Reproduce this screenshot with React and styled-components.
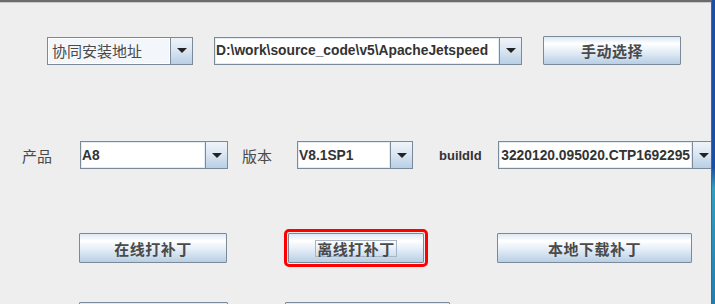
import styled, { createGlobalStyle } from "styled-components";

const GlobalStyle = createGlobalStyle`
	html, body {
		margin: 0;
		padding: 0;
		background: #eeeeee;
		overflow: hidden;
	}
`;

const Screen = styled.div`
	width: 715px;
	height: 304px;
	display: flex;
	overflow: hidden;
	background: #eeeeee;
`;

const Panel = styled.div`
	flex: 1;
	min-width: 0;
	display: flex;
	flex-direction: column;
	overflow: hidden;
	border-top: 2px solid #6b6b6b;
	box-shadow: inset 0 1px 0 #c9c9c9;
`;

const DesktopEdge = styled.div`
	width: 3px;
	border-left: 1px solid #5a6470;
	background: linear-gradient(#1c4ea6 0%, #1c4ea6 55%, #2f9fc0 62%, #1e7fb0 100%);
`;

const Row = styled.div`
	display: flex;
	align-items: center;
	flex-shrink: 0;
	height: ${(p) => p.h}px;
	margin-top: ${(p) => p.top}px;
	padding-left: ${(p) => p.left || 0}px;
`;

const Label = styled.span`
	font-family: "Noto Sans CJK SC", sans-serif;
	font-size: 15px;
	color: #4a4a4a;
	width: ${(p) => p.w}px;
	flex-shrink: 0;
	margin-left: ${(p) => p.ml || 0}px;
`;

const LatinLabel = styled.span`
	font-family: "Liberation Sans", Arial, sans-serif;
	font-weight: bold;
	font-size: 13px;
	color: #333333;
	width: ${(p) => p.w}px;
	flex-shrink: 0;
	margin-left: ${(p) => p.ml || 0}px;
`;

const Combo = styled.div`
	display: flex;
	flex-shrink: 0;
	width: ${(p) => p.w}px;
	height: 28px;
	box-sizing: border-box;
	border: 1px solid #7a8a99;
	margin-left: ${(p) => p.ml || 0}px;
	background: ${(p) => (p.editable ? "#ffffff" : "#f3f6fa")};
`;

const ComboField = styled.div`
	flex: 1;
	min-width: 0;
	display: flex;
	align-items: center;
	justify-content: ${(p) => (p.alignEnd ? "flex-end" : "flex-start")};
	overflow: hidden;
	white-space: nowrap;
	padding: 0 ${(p) => (p.alignEnd ? 2 : 1)}px 0 ${(p) => (p.cjk ? 4 : 1)}px;
	box-shadow: inset 0 0 0 1px ${(p) => (p.cjk ? "#ffffff" : "#e3ecf5")};
	font-family: ${(p) =>
		p.cjk
			? `"Noto Sans CJK SC", sans-serif`
			: `"Liberation Sans", Arial, sans-serif`};
	font-weight: ${(p) => (p.cjk ? "normal" : "bold")};
	font-size: ${(p) => (p.cjk ? 15 : 13.8)}px;
	color: ${(p) => (p.cjk ? "#4a4a4a" : "#333333")};
`;

const ArrowButton = styled.div`
	width: 21px;
	flex-shrink: 0;
	display: flex;
	align-items: center;
	justify-content: center;
	border-left: 1px solid #7a8a99;
	background: linear-gradient(#eef3f9 0%, #dce7f2 45%, #b8cfe5 100%);
	&::after {
		content: "";
		border-left: 5px solid transparent;
		border-right: 5px solid transparent;
		border-top: 5px solid #222222;
	}
`;

const Button = styled.div`
	flex-shrink: 0;
	width: ${(p) => p.w}px;
	height: ${(p) => p.h || 30}px;
	margin-left: ${(p) => p.ml || 0}px;
	box-sizing: border-box;
	border: 1px solid #7a8a99;
	border-radius: 1px;
	display: flex;
	align-items: center;
	justify-content: center;
	background: linear-gradient(#dde8f3 0%, #ffffff 25%, #e4edf6 55%, #b8cfe5 100%);
	font-family: "Noto Sans CJK SC", sans-serif;
	font-weight: bold;
	font-size: 15px;
	letter-spacing: 0.5px;
	color: #4a4a4a;
	outline: ${(p) => (p.marked ? "3px solid #ff0000" : "none")};
	outline-offset: 1px;
`;

const FocusText = styled.span`
	padding: 0 1px;
	border: 1px solid #a7b6c6;
	line-height: 15px;
`;

const Combobox = ({ w, ml, editable, cjk, alignEnd, children }) => (
	<Combo w={w} ml={ml} editable={editable}>
		<ComboField cjk={cjk} alignEnd={alignEnd}>
			{children}
		</ComboField>
		<ArrowButton />
	</Combo>
);

const App = () => {
	return (
		<>
			<GlobalStyle />
			<Screen>
				<Panel>
					<Row h={29} top={34} left={47}>
						<Combobox w={146} cjk>
							协同安装地址
						</Combobox>
						<Combobox w={308} ml={21} editable>
							D:\work\source_code\v5\ApacheJetspeed
						</Combobox>
						<Button w={138} h={29} ml={21}>
							手动选择
						</Button>
					</Row>
					<Row h={28} top={76} left={22}>
						<Label w={58}>产品</Label>
						<Combobox w={148} editable>
							A8
						</Combobox>
						<Label w={55} ml={14}>
							版本
						</Label>
						<Combobox w={116} editable>
							V8.1SP1
						</Combobox>
						<LatinLabel w={59} ml={26}>
							buildId
						</LatinLabel>
						<Combobox w={217} editable alignEnd>
							3220120.095020.CTP1692295
						</Combobox>
					</Row>
					<Row h={30} top={64} left={79}>
						<Button w={148}>在线打补丁</Button>
						<Button w={136} ml={61} marked>
							<FocusText>离线打补丁</FocusText>
						</Button>
						<Button w={195} ml={73}>
							本地下载补丁
						</Button>
					</Row>
					<Row h={30} top={39} left={79}>
						<Button w={149} />
						<Button w={165} ml={57} />
					</Row>
				</Panel>
				<DesktopEdge />
			</Screen>
		</>
	);
};

export default App;
